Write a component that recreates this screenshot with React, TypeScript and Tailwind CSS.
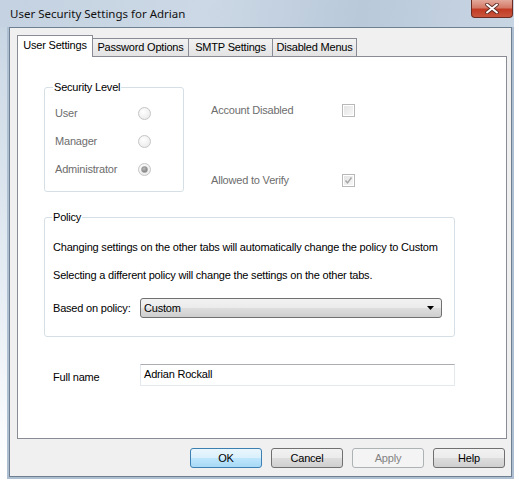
import React from "react";

const font = "font-['Liberation_Sans',Arial,sans-serif]";

function Radio({ checked }: { checked?: boolean }) {
  return (
    <div className="w-[13px] h-[13px] rounded-full border border-[#c5c5c5] bg-[radial-gradient(circle_at_40%_35%,#ffffff,#e6e6e6)] flex items-center justify-center">
      {checked && (
        <div className="w-[7px] h-[7px] rounded-full border border-[#9a9a9a] bg-[radial-gradient(circle_at_40%_35%,#bdbdbd,#6f6f6f)]" />
      )}
    </div>
  );
}

function Check({ checked }: { checked?: boolean }) {
  return (
    <div className="w-[13px] h-[13px] border border-[#b8b8b8] bg-white p-px">
      <div className="w-full h-full bg-[linear-gradient(135deg,#e4e4e4,#f7f7f7)] flex items-center justify-center">
        {checked && (
          <svg width="9" height="9" viewBox="0 0 9 9">
            <path d="M1.5 4.5 L3.5 6.8 L7.5 1.5" fill="none" stroke="#a6a6a6" strokeWidth="1.4" />
          </svg>
        )}
      </div>
    </div>
  );
}

function Tab({ label, active, w }: { label: string; active?: boolean; w: string }) {
  if (active) {
    return (
      <div className={`${w} h-[22px] -mb-px relative z-10 border border-b-0 border-[#898c95] bg-white flex items-center justify-center pb-[2px] whitespace-nowrap`}>
        {label}
      </div>
    );
  }
  return (
    <div className={`${w} h-[18px] -ml-px border border-b-0 border-[#898c95] bg-[linear-gradient(to_bottom,#f2f2f2,#e3e3e3)] flex items-center justify-center whitespace-nowrap`}>
      {label}
    </div>
  );
}

function Btn({ label, kind }: { label: string; kind?: "default" | "disabled" }) {
  const look =
    kind === "default"
      ? "border-[#3c7fb1] bg-[linear-gradient(to_bottom,#eaf6fd_0%,#d9f0fc_50%,#bee6fd_51%,#a7d9f5_100%)] text-black"
      : kind === "disabled"
      ? "border-[#adb2b5] bg-[#f4f4f4] text-[#838383]"
      : "border-[#707070] bg-[linear-gradient(to_bottom,#f2f2f2_0%,#ebebeb_50%,#dddddd_51%,#cfcfcf_100%)] text-black";
  return (
    <div className={`w-[72px] h-[20px] rounded-[3px] border ${look} flex items-center justify-center`}>
      {label}
    </div>
  );
}

export default function App() {
  return (
    <div className={`w-[519px] h-[488px] bg-white text-[11px] tracking-[-0.2px] text-black ${font}`}>
      <div className="w-[514px] h-[479px] flex flex-col bg-[linear-gradient(to_bottom,#c3d1e0_0%,#cfdbe7_15%,#e6edf4_60%,#ffffff_100%)]">
        {/* Title bar */}
        <div className="h-[27px] flex items-start justify-between bg-[linear-gradient(100deg,#c4d2e1_0%,#ccd8e5_40%,#b9c9da_70%,#c8d5e3_100%)]">
          <div className="pl-[10px] pt-[5px] text-[11.5px] tracking-normal font-['Noto_Sans',sans-serif] text-[#111]">
            User Security Settings for Adrian
          </div>
          <div className="mr-[1px] w-[42px] h-[18px] rounded-b-[4px] border border-t-0 border-[#6c2a22] bg-[linear-gradient(to_bottom,#e3a99b_0%,#d47a68_45%,#c23b24_55%,#c9553d_100%)] flex items-center justify-center">
            <svg width="14" height="11" viewBox="0 0 14 11">
              <path d="M2 1.5 L12 9.5 M12 1.5 L2 9.5" stroke="#5b2a24" strokeWidth="3.6" strokeLinecap="round" />
              <path d="M2 1.5 L12 9.5 M12 1.5 L2 9.5" stroke="#ffffff" strokeWidth="2" strokeLinecap="round" />
            </svg>
          </div>
        </div>

        {/* Frame */}
        <div className="flex-1 ml-[7px] border-l-2 border-r-2 border-b-2 border-[#aebfd2]">
          <div className="h-full border border-[#6f7f92] bg-[#f0f0f0] flex flex-col pl-[7px] pt-[7px]">
            {/* Tabs */}
            <div className="h-[21px] flex items-end">
              <Tab label="User Settings" active w="w-[76px]" />
              <Tab label="Password Options" w="w-[97px]" />
              <Tab label="SMTP Settings" w="w-[85px]" />
              <Tab label="Disabled Menus" w="w-[85px]" />
            </div>

            {/* Tab page */}
            <div className="w-[490px] h-[383px] border border-[#898c95] bg-white pl-[26px] pt-[24px]">
              <div className="flex">
                <fieldset className="w-[140px] h-[111px] border border-[#d5dfe5] rounded-[3px]">
                  <legend className="ml-[8px] px-px leading-[13px]">Security Level</legend>
                  <div className="pl-[10px] pt-[5px] text-[#6d6d6d]">
                    {[
                      ["User", false],
                      ["Manager", false],
                      ["Administrator", true],
                    ].map(([l, c]) => (
                      <div key={l as string} className="h-[28px] flex items-center">
                        <div className="w-[83px]">{l as string}</div>
                        <Radio checked={c as boolean} />
                      </div>
                    ))}
                  </div>
                </fieldset>

                <div className="ml-[27px] pt-[21px] flex flex-col gap-[54px] text-[#6d6d6d]">
                  <div className="h-[16px] flex items-center">
                    <div className="w-[131px]">Account Disabled</div>
                    <Check />
                  </div>
                  <div className="h-[16px] flex items-center">
                    <div className="w-[131px]">Allowed to Verify</div>
                    <Check checked />
                  </div>
                </div>
              </div>

              <fieldset className="mt-[19px] w-[411px] h-[126px] border border-[#d5dfe5] rounded-[3px]">
                <legend className="ml-[7px] px-px leading-[13px]">Policy</legend>
                <div className="pl-[8px] pt-[16px]">
                  <div className="leading-[14px] whitespace-nowrap">
                    Changing settings on the other tabs will automatically change the policy to Custom
                  </div>
                  <div className="leading-[14px] mt-[14px] whitespace-nowrap">
                    Selecting a different policy will change the settings on the other tabs.
                  </div>
                  <div className="mt-[16px] flex items-center">
                    <div className="w-[87px]">Based on policy:</div>
                    <div className="w-[302px] h-[20px] rounded-[3px] border border-[#707070] bg-[linear-gradient(to_bottom,#f2f2f2_0%,#ebebeb_50%,#dddddd_51%,#cfcfcf_100%)] flex items-center justify-between pl-[3px] pr-[7px]">
                      <span>Custom</span>
                      <svg width="7" height="4" viewBox="0 0 7 4">
                        <path d="M0 0 H7 L3.5 4 Z" fill="#000" />
                      </svg>
                    </div>
                  </div>
                </div>
              </fieldset>

              <div className="mt-[27px] flex items-center">
                <div className="w-[96px] pl-[9px] pt-[4px]">Full name</div>
                <div className="w-[315px] h-[22px] border border-[#e3e9ef] border-t-[#abadb3] bg-white flex items-center pl-[3px] pb-[2px]">
                  Adrian Rockall
                </div>
              </div>
            </div>

            {/* Buttons */}
            <div className="mt-[9px] pr-[6px] flex justify-end gap-[9px]">
              <Btn label="OK" kind="default" />
              <Btn label="Cancel" />
              <Btn label="Apply" kind="disabled" />
              <Btn label="Help" />
            </div>
          </div>
        </div>
      </div>
    </div>
  );
}
